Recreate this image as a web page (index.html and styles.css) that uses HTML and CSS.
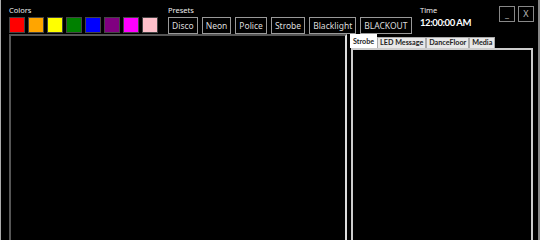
FILE: index.html
```html
<!DOCTYPE html>
<html>
<head>
    <meta charset="utf-8">
    <title>Light Control</title>
    <link rel="stylesheet" href="styles.css">
</head>
<body>
    <div class="window">
        <div class="top">
            <!--颜色-->
            <div class="group colors">
                <div class="caption">Colors</div>
                <div class="swatches">
                    <span class="swatch" style="background:#ff0000"></span>
                    <span class="swatch" style="background:#ffa500"></span>
                    <span class="swatch" style="background:#ffff00"></span>
                    <span class="swatch" style="background:#008000"></span>
                    <span class="swatch" style="background:#0000ff"></span>
                    <span class="swatch" style="background:#800080"></span>
                    <span class="swatch" style="background:#ff00ff"></span>
                    <span class="swatch" style="background:#ffc0cb"></span>
                </div>
            </div>
            <!--预设-->
            <div class="group presets">
                <div class="caption">Presets</div>
                <div class="buttons">
                    <button class="preset">Disco</button>
                    <button class="preset">Neon</button>
                    <button class="preset">Police</button>
                    <button class="preset">Strobe</button>
                    <button class="preset">Blacklight</button>
                    <button class="preset">BLACKOUT</button>
                </div>
            </div>
            <!--时间-->
            <div class="group time">
                <div class="caption">Time</div>
                <div class="clock">12:00:00 AM</div>
            </div>
            <div class="winbtns">
                <button class="winbtn">_</button>
                <button class="winbtn">X</button>
            </div>
        </div>
        <div class="main">
            <div class="stage"></div>
            <div class="tabs">
                <div class="tabrow">
                    <span class="tab active">Strobe</span>
                    <span class="tab">LED Message</span>
                    <span class="tab">DanceFloor</span>
                    <span class="tab">Media</span>
                </div>
                <div class="tabbody"></div>
            </div>
        </div>
    </div>
</body>
</html>
```

FILE: styles.css
```css
html, body{
    margin:0;
    padding:0;
    background:#000;
}
.window{
    width:540px;
    height:240px;
    box-sizing:border-box;
    border-left:1px solid #aaa;
    border-right:2px solid #888;
    overflow:hidden;
    font-family:"Noto Sans", "Open Sans", sans-serif;
    color:#fff;
    display:flex;
    flex-direction:column;
}
.top{
    display:flex;
    padding:5px 0 0 8px;
    height:30px;
}
.group{
    flex-shrink:0;
}
.caption{
    font-size:7.5px;
    line-height:11px;
    height:11px;
    color:#eee;
}
.colors{
    width:159px;
}
.swatches{
    display:flex;
    gap:3px;
    margin-top:1px;
}
.swatch{
    width:14px;
    height:14px;
    border:1px solid #444;
}
.presets{
    width:252px;
}
.buttons{
    display:flex;
    gap:4px;
    margin-top:1px;
}
.preset{
    height:17px;
    padding:0 3px;
    background:#000;
    color:#ddd;
    border:1px solid #999;
    font-family:"Noto Sans", "Open Sans", sans-serif;
    font-size:8.5px;
    line-height:14px;
}
.time{
    flex:1;
}
.clock{
    font-family:Lato, "Noto Sans", sans-serif;
    font-size:9.5px;
    font-weight:bold;
    letter-spacing:-0.4px;
    line-height:13px;
}
.winbtns{
    display:flex;
    gap:3px;
    padding-top:1px;
    margin-right:4px;
}
.winbtn{
    width:16px;
    height:16px;
    padding:0;
    background:#000;
    color:#bbb;
    border:1px solid #888;
    font-family:"Noto Sans", sans-serif;
    font-size:9px;
    line-height:14px;
}
.main{
    flex:1;
    display:flex;
    padding-left:8px;
}
.stage{
    width:334px;
    height:220px;
    border:2px solid #555;
    border-right-color:#ddd;
}
.tabs{
    margin-left:3px;
    width:183px;
    display:flex;
    flex-direction:column;
}
.tabrow{
    display:flex;
    align-items:flex-end;
    height:13px;
    margin-top:1px;
}
.tab{
    height:10px;
    padding:0 2px;
    background:#e8e8e8;
    color:#222;
    border:1px solid #aaa;
    border-bottom:none;
    font-family:Lato, "Noto Sans", sans-serif;
    font-size:7.2px;
    font-weight:bold;
    line-height:10px;
}
.tab.active{
    height:13px;
    background:#fff;
    border-color:#fff;
    line-height:13px;
}
.tabbody{
    margin-left:1px;
    width:178px;
    height:200px;
    border:2px solid #ccc;
    border-bottom:none;
}
```
